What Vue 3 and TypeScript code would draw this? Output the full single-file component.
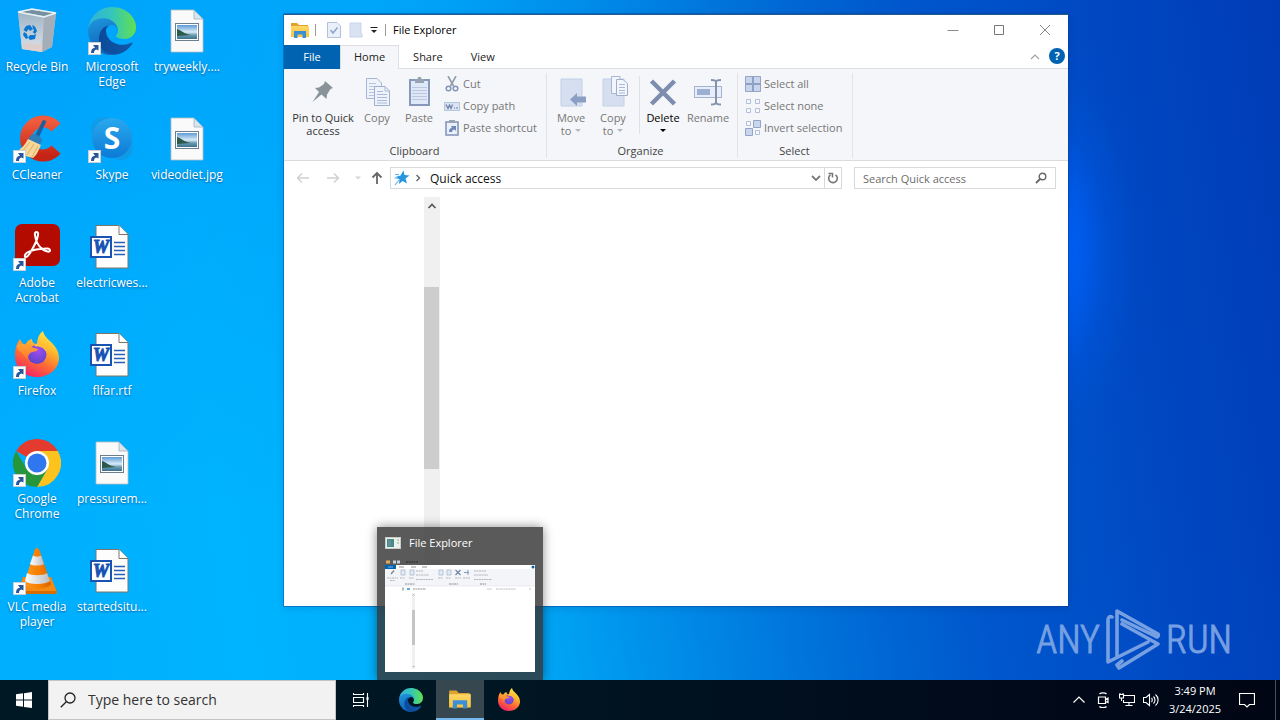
<script setup lang="ts">
import { ref } from 'vue'

interface DesktopItem {
  name: string
  icon: string
  shortcut: boolean
  col: number
  row: number
}

const items: DesktopItem[] = [
  { name: 'Recycle Bin', icon: 'bin', shortcut: false, col: 1, row: 1 },
  { name: 'CCleaner', icon: 'ccleaner', shortcut: true, col: 1, row: 2 },
  { name: 'Adobe Acrobat', icon: 'acrobat', shortcut: true, col: 1, row: 3 },
  { name: 'Firefox', icon: 'firefox', shortcut: true, col: 1, row: 4 },
  { name: 'Google Chrome', icon: 'chrome', shortcut: true, col: 1, row: 5 },
  { name: 'VLC media player', icon: 'vlc', shortcut: true, col: 1, row: 6 },
  { name: 'Microsoft Edge', icon: 'edge', shortcut: true, col: 2, row: 1 },
  { name: 'Skype', icon: 'skype', shortcut: true, col: 2, row: 2 },
  { name: 'electricwes...', icon: 'word', shortcut: false, col: 2, row: 3 },
  { name: 'flfar.rtf', icon: 'word', shortcut: false, col: 2, row: 4 },
  { name: 'pressurem...', icon: 'picture', shortcut: false, col: 2, row: 5 },
  { name: 'startedsitu...', icon: 'word', shortcut: false, col: 2, row: 6 },
  { name: 'tryweekly....', icon: 'picture', shortcut: false, col: 3, row: 1 },
  { name: 'videodiet.jpg', icon: 'picture', shortcut: false, col: 3, row: 2 },
]

const tabs = ['Home', 'Share', 'View']
const activeTab = ref('Home')

const clipboardSmall = [
  { label: 'Cut', icon: 'cut' },
  { label: 'Copy path', icon: 'copypath' },
  { label: 'Paste shortcut', icon: 'pasteshortcut' },
]
const selectSmall = [
  { label: 'Select all', icon: 'selall' },
  { label: 'Select none', icon: 'selnone' },
  { label: 'Invert selection', icon: 'selinv' },
]

const folderQuery = ref('')
const systemQuery = ref('')
</script>

<template>
  <div class="screen">
    <svg class="defs" aria-hidden="true">
      <defs>
        <linearGradient id="gEdgeTop" x1="0" y1="0.3" x2="1" y2="0.3">
          <stop offset="0" stop-color="#2fb1e0" /><stop offset="0.5" stop-color="#34c6b9" /><stop offset="1" stop-color="#62e04f" />
        </linearGradient>
        <linearGradient id="gEdgeMid" x1="0" y1="0" x2="0.3" y2="1">
          <stop offset="0" stop-color="#1f9be0" /><stop offset="1" stop-color="#0f62b8" />
        </linearGradient>
        <linearGradient id="gEdgeLow" x1="0" y1="0" x2="1" y2="0">
          <stop offset="0" stop-color="#0b4a9a" /><stop offset="1" stop-color="#1257a8" />
        </linearGradient>
        <linearGradient id="gFox" x1="0.8" y1="0" x2="0.3" y2="1">
          <stop offset="0" stop-color="#fff04a" /><stop offset="0.35" stop-color="#ffb62e" /><stop offset="0.65" stop-color="#ff6a33" /><stop offset="1" stop-color="#f0206c" />
        </linearGradient>
        <linearGradient id="gFoxHead" x1="0" y1="0" x2="0" y2="1">
          <stop offset="0" stop-color="#ffa436" /><stop offset="1" stop-color="#ff7a2c" />
        </linearGradient>
        <radialGradient id="gFoxGlobe" cx="0.55" cy="0.3" r="0.8">
          <stop offset="0" stop-color="#a04cf0" /><stop offset="1" stop-color="#5343c4" />
        </radialGradient>
        <linearGradient id="gSkype" x1="0" y1="0" x2="0" y2="1">
          <stop offset="0" stop-color="#2aa9ee" /><stop offset="1" stop-color="#0b7ad6" />
        </linearGradient>
        <linearGradient id="gC" x1="0" y1="0" x2="0" y2="1">
          <stop offset="0" stop-color="#ef5b3c" /><stop offset="1" stop-color="#c42414" />
        </linearGradient>
        <linearGradient id="gCone" x1="0" y1="0" x2="1" y2="0">
          <stop offset="0" stop-color="#ff9a1f" /><stop offset="0.6" stop-color="#f57c00" /><stop offset="1" stop-color="#d96200" />
        </linearGradient>
        <linearGradient id="gConeW" x1="0" y1="0" x2="1" y2="0">
          <stop offset="0" stop-color="#ffffff" /><stop offset="1" stop-color="#b9bcc0" />
        </linearGradient>
        <linearGradient id="gSky" x1="0" y1="0" x2="0" y2="1">
          <stop offset="0" stop-color="#5f9ad6" /><stop offset="0.5" stop-color="#d9ecf8" /><stop offset="0.7" stop-color="#6f9fb5" /><stop offset="1" stop-color="#39708f" />
        </linearGradient>
        <linearGradient id="gBinL" x1="0" y1="0" x2="0" y2="1">
          <stop offset="0" stop-color="#9fb4c4" /><stop offset="1" stop-color="#dde3ea" />
        </linearGradient>
        <linearGradient id="gFolder" x1="0" y1="0" x2="0" y2="1">
          <stop offset="0" stop-color="#ffd766" /><stop offset="1" stop-color="#f7c43c" />
        </linearGradient>
      </defs>

      <symbol id="i-bin" viewBox="0 0 48 48">
        <path d="M5 5 L19 2 L43 6 L39 40 L29 45 L9 42 Z" fill="#b9c6d1" opacity="0.95" />
        <path d="M5 5 L31 10 L29 45 L9 42 Z" fill="url(#gBinL)" />
        <path d="M31 10 L43 6 L39 40 L29 45 Z" fill="#a4aeb8" />
        <path d="M7 5 L19 3 L41 6 L31 9 Z" fill="#76909f" />
        <path d="M5 5 L19 2 L43 6 L31 10 Z" fill="none" stroke="#e9f2f8" stroke-width="1.4" />
        <path d="M10 36 L30 38 L29 45 L10 42 Z" fill="#e5c3bb" opacity="0.6" />
        <g fill="#0a78d2">
          <path d="M13 19 L17 18 L20 22 L17 24 L15.500 22 L13.500 25 L10.500 23 Z" />
          <path d="M19 18 L22 19.500 L24 24 L22 27 L19.500 25 L21 24 Z" />
          <path d="M11 25 L14 27 L15 31 L13 32 L10 28 Z" />
          <path d="M17 28 L21 28 L23 27 L22 32 L17 33 L15 30.500 Z" />
        </g>
      </symbol>

      <symbol id="i-edge" viewBox="0 0 256 256">
        <path fill="url(#gEdgeMid)" d="M105.730,241.420A79.200,79.200,0,0,1,83,220.080,80.720,80.720,0,0,1,112.540,100.200c3.120-1.470,8.450-4.130,15.540-4a32.350,32.350,0,0,1,25.690,13A31.880,31.880,0,0,1,160.130,128c0-.21,24.460-79.600-80-79.600-43.900,0-80,41.660-80,78.210A130.150,130.150,0,0,0,12.300,183a128,128,0,0,0,156.400,67.110,75.550,75.550,0,0,1-62.780-8Z" />
        <path fill="url(#gEdgeLow)" d="M231,190.500A94,94,0,0,1,220.500,195.200a101.900,101.900,0,0,1-35.900,6.460c-47.320,0-88.540-32.550-88.540-74.320A31.500,31.500,0,0,1,112.500,99.900C69.700,101.700,58.700,146.300,58.700,172.400c0,73.900,68.100,81.400,82.800,81.400,7.900,0,19.800-2.300,27-4.600l1.300-.4a128.300,128.300,0,0,0,66.600-52.800,4,4,0,0,0-5.400-5.500Z" />
        <path fill="url(#gEdgeTop)" d="M152.330,148.860c-.81,1.050-3.300,2.500-3.300,5.660,0,2.610,1.700,5.120,4.720,7.230,14.380,10,41.490,8.680,41.560,8.680a59.560,59.560,0,0,0,30.270-8.350A61.380,61.380,0,0,0,256,109.190c.26-22.410-8-37.310-11.340-43.910C223.460,23.840,177.720,0,128,0A128,128,0,0,0,0,126.200c.48-36.540,36.800-66.050,80-66.050,3.500,0,23.460.34,42,10.070,16.340,8.580,24.900,18.940,30.850,29.210,6.180,10.670,7.280,24.150,7.280,29.520S157.380,142.270,152.330,148.860Z" />
      </symbol>

      <symbol id="i-ccleaner" viewBox="0 0 48 48">
        <path d="M43 12.500 A17 17 0 1 0 43 34.500" fill="none" stroke="url(#gC)" stroke-width="12" />
        <path d="M30 5 L33.500 6 L26 22 L22 20.500 Z" fill="#1d5f9e" />
        <path d="M17 21 C21 18 28 20 29 26 L26 31 L15 25 Z" fill="#2d7dbb" />
        <path d="M15 24 L28 30 C25 36 24 40 20 43 L2 38 C8 34 12 30 15 24 Z" fill="#f5d79b" />
        <path d="M17 27 L8 38 M21 29 L14 40 M25 31 L19 42" stroke="#dcae62" stroke-width="1" fill="none" />
      </symbol>

      <symbol id="i-acrobat" viewBox="0 0 48 48">
        <rect x="2" y="1" width="45" height="42" rx="7" fill="#b30b00" />
        <path d="M22 12 C21 8 26 8 25 12 C24 19 20 25 17 30 C14 35 11 35 12 32 C13 29 20 26.500 27 26 C33 25 37 25 37 27.500 C37 30 31 28 28 25 C24 21 22.500 17 22 12 Z" fill="none" stroke="#ffffff" stroke-width="2" />
      </symbol>

      <symbol id="i-firefox" viewBox="0 0 48 48">
        <path d="M7 8 C8 11 10 13 12 14 C14 10 17 8 19 8 C19 11 21 13 24 13 C24 8 26 3 30 0 C31 5 35 8 39 12 C44 17 46 22 46 27 C46 38 36 46 24 46 C11 46 2 37 2 25 C2 17 4 12 7 8 Z" fill="url(#gFox)" />
        <circle cx="24" cy="23.500" r="9.500" fill="url(#gFoxGlobe)" />
        <path d="M4 14 C9 12 14 13 18 16 L25 18 C25 20 21 20.500 18 21.500 C15.500 23 15 25 15 28 C11 26 10 21 5 19 Z" fill="url(#gFoxHead)" />
        <path d="M22 13 C28 11 35 14 34 22 C31 17 28 15 22 15.500 Z" fill="#ffbe3a" />
      </symbol>

      <symbol id="i-chrome" viewBox="0 0 48 48">
        <path d="M24 24 L3.200 12 A24 24 0 0 1 44.800 12 Z" fill="#e33b2e" />
        <path d="M24 24 L24 12 L44.800 12 A24 24 0 0 1 24 48 L34.400 30 Z" fill="#fcc31e" />
        <path d="M24 24 L34.400 30 L24 48 A24 24 0 0 1 3.200 12 L13.600 30 Z" fill="#26963c" />
        <circle cx="24" cy="24" r="12" fill="#ffffff" />
        <circle cx="24" cy="24" r="9.500" fill="#3076ee" />
      </symbol>

      <symbol id="i-vlc" viewBox="0 0 48 48">
        <path d="M10 30 L38 30 L44 45 C44 47 42 47 41 47 L7 47 C5 47 4 46 5 44 Z" fill="#f58a10" />
        <path d="M5 44 L44 44 L43 47 L6 47 Z" fill="#d96c00" />
        <path d="M22 2 C22 1 26 1 26 2 L38 37 C35 43 13 43 11 37 Z" fill="url(#gCone)" />
        <path d="M20 8.500 C22 10 26 10 28 8.500 L31 17 C28 19 20 19 17 17 Z" fill="url(#gConeW)" />
        <path d="M14 26 C18 29 30 29 34 26 L37 34 C32 38 16 38 12 34 Z" fill="url(#gConeW)" />
      </symbol>

      <symbol id="i-skype" viewBox="0 0 48 48">
        <circle cx="15" cy="14" r="12" fill="#109be8" />
        <circle cx="33" cy="33" r="12" fill="#109be8" />
        <circle cx="24" cy="23" r="20" fill="url(#gSkype)" />
      </symbol>

      <symbol id="i-word" viewBox="0 0 48 48">
        <path d="M8 2.500 H31 L40 11.500 V45 H8 Z" fill="#fdfdfd" stroke="#7c7468" stroke-width="1" />
        <path d="M31 2.500 V11.500 H40" fill="#ffffff" stroke="#7c7468" stroke-width="1" />
        <path d="M26 19.500 H37 M26 23.500 H37 M26 27.500 H37 M26 31.500 H37" stroke="#2b5fb8" stroke-width="1.300" />
        <rect x="3" y="14" width="20" height="20" fill="#ffffff" stroke="#1853b4" stroke-width="2" />
      </symbol>

      <symbol id="i-picture" viewBox="0 0 48 48">
        <path d="M8 3 H31 L40 12 V45 H8 Z" fill="#fafafa" stroke="#b9bdc0" stroke-width="0.800" />
        <path d="M31 3 V12 H40 Z" fill="#d9e6ef" stroke="#9db3c2" stroke-width="0.800" />
        <rect x="12.500" y="16.500" width="23" height="17" fill="#ffffff" stroke="#6d7f8c" stroke-width="1" />
        <rect x="14" y="18" width="20" height="14" fill="url(#gSky)" />
        <path d="M14 22 C18 23 21 27 28 28 L14 29 Z" fill="#2c5a4a" />
      </symbol>

      <symbol id="i-folder" viewBox="0 0 20 20">
        <path d="M1 3 H7 L9 5 H18 V17 H1 Z" fill="#e0a22c" />
        <path d="M1 6 H19 V17 H1 Z" fill="url(#gFolder)" />
        <path d="M4 18 V11 H16 V18 H12.500 V14.500 H7.500 V18 Z" fill="#3a8fd6" />
      </symbol>

      <symbol id="i-pin" viewBox="0 0 32 32">
        <path d="M18 5 L26 12 L23.500 13 L20 18.500 L19.500 23 L14.500 18.500 L5.500 26 L12 16 L8 12 L12 11.500 L17 8 Z" fill="#8a9399" />
      </symbol>
      <symbol id="i-copy" viewBox="0 0 32 32">
        <path d="M5.500 2.500 H16 L20.500 7 V22.500 H5.500 Z" fill="#eef3fb" stroke="#a9b7d2" />
        <path d="M8 7.500 H15 M8 10.500 H17 M8 13.500 H17 M8 16.500 H17 M8 19.500 H17" stroke="#b8c5dd" />
        <path d="M13.500 10.500 H24 L28.500 15 V29.500 H13.500 Z" fill="#eef3fb" stroke="#9fafcd" />
        <path d="M24 10.500 V15 H28.500 M16 15.500 H22 M16 18.500 H26 M16 21.500 H26 M16 24.500 H26 M16 27 H26" fill="none" stroke="#a9b9d6" />
      </symbol>
      <symbol id="i-paste" viewBox="0 0 32 32">
        <rect x="7" y="4" width="19" height="25" fill="#dfe8f7" stroke="#8798bb" stroke-width="2" />
        <path d="M12 3 H14.500 C14.500 0 18.500 0 18.500 3 H21 V7 H12 Z" fill="#97a3b5" />
        <path d="M9 11.500 H24 M9 14.500 H24 M9 17.500 H24 M9 20.500 H24 M9 23.500 H24" stroke="#b9c7e2" />
      </symbol>
      <symbol id="i-moveto" viewBox="0 0 32 32">
        <path d="M6 3 H27 V30 H6 Z" fill="#d5dff0" stroke="#c3d0e6" />
        <path d="M15 23.500 L22 17 V20.500 H31 V26.500 H22 V30 Z" fill="#8b9fc5" />
      </symbol>
      <symbol id="i-copyto" viewBox="0 0 32 32">
        <path d="M6 3 H27 V30 H6 Z" fill="#d5dff0" stroke="#c3d0e6" />
        <path d="M14.500 0.500 H23 V17.500 H14.500 Z" fill="#f2f6fc" stroke="#a9b7d2" />
        <path d="M19.500 3.500 H26 L30.500 7.500 V19.500 H19.500 Z" fill="#f2f6fc" stroke="#9fafcd" />
        <path d="M22 8.500 H28 M22 11.500 H28 M22 14.500 H28 M22 17 H28" stroke="#a9b9d6" />
      </symbol>
      <symbol id="i-delete" viewBox="0 0 32 32">
        <path d="M4.500 5 L27.500 28 M27.500 5 L4.500 28" stroke="#7c8db0" stroke-width="4.500" fill="none" />
      </symbol>
      <symbol id="i-rename" viewBox="0 0 32 32">
        <rect x="2.500" y="10.500" width="27" height="11" fill="#e8eef9" stroke="#a3b3d0" />
        <rect x="5" y="13" width="13" height="6" fill="#9db0d4" />
        <path d="M19 4 C21 4 24 4 24 6 C24 4 27 4 29 4 M24 5 V27 M19 28.500 C21 28.500 24 28 24 26 C24 28 27 28.500 29 28.500" stroke="#8494ad" stroke-width="2" fill="none" />
      </symbol>

      <symbol id="i-cut" viewBox="0 0 16 16">
        <path d="M4 0 L9.500 10 M12 0 L6.500 10" stroke="#929da8" stroke-width="1.600" fill="none" />
        <circle cx="4.500" cy="12.500" r="2.300" fill="none" stroke="#8496b6" stroke-width="1.500" />
        <circle cx="11.500" cy="12.500" r="2.300" fill="none" stroke="#8496b6" stroke-width="1.500" />
      </symbol>
      <symbol id="i-copypath" viewBox="0 0 16 16">
        <rect x="0.500" y="4.500" width="15" height="8" fill="#dbe4f3" stroke="#b6c4dd" />
        <path d="M2 6.500 L4 10.500 L5.500 7 L7 10.500 L8.500 6.500 M10 10 H11 M12 10 H14" stroke="#6c7fa5" stroke-width="1.200" fill="none" />
      </symbol>
      <symbol id="i-pasteshortcut" viewBox="0 0 16 16">
        <rect x="2" y="2" width="12" height="13" fill="#eaf0fa" stroke="#8798bb" stroke-width="1.600" />
        <rect x="5" y="0" width="6" height="3" fill="#97a3b5" />
        <path d="M5 12 C5 9 6 8 8 8 L7 6 H12 V11 L10.500 9.500 C9 9.500 8 10.500 8 12 Z" fill="#6d86b8" />
      </symbol>
      <symbol id="i-selall" viewBox="0 0 16 16">
        <path d="M0.500 0.500 H15.500 V15.500 H0.500 Z" fill="#c9d5ec" stroke="#93a4c6" />
        <path d="M8 1 V15 M1 8 H15" stroke="#8ea0c4" stroke-width="2" />
      </symbol>
      <symbol id="i-selnone" viewBox="0 0 16 16">
        <path d="M1.500 1.500 H5.500 V5.500 H1.500 Z M10.500 1.500 H14.500 V5.500 H10.500 Z M1.500 10.500 H5.500 V14.500 H1.500 Z M10.500 10.500 H14.500 V14.500 H10.500 Z" fill="#f7f9fd" stroke="#b0bfda" />
      </symbol>
      <symbol id="i-selinv" viewBox="0 0 16 16">
        <path d="M8.500 0.500 H15.500 V7.500 H8.500 Z M0.500 8.500 H7.500 V15.500 H0.500 Z" fill="#c9d5ec" stroke="#93a4c6" />
        <path d="M1.500 1.500 H5.500 V5.500 H1.500 Z M10.500 10.500 H14.500 V14.500 H10.500 Z" fill="#f7f9fd" stroke="#b0bfda" />
      </symbol>
    </svg>

    <main class="desktop">
      <ul class="icons">
        <li v-for="it in items" :key="it.name" :class="['cell', 'c' + it.col, 'r' + it.row]">
          <button class="shortcut" type="button">
            <span class="pic">
              <svg class="pic-main" viewBox="0 0 48 48">
                <use :href="'#i-' + it.icon" />
                <text v-if="it.icon === 'word'" class="glyph-w" x="13" y="30">W</text>
                <text v-if="it.icon === 'skype'" class="glyph-s" x="24" y="34">S</text>
              </svg>
              <svg v-if="it.shortcut" class="pic-link" viewBox="0 0 13 13">
                <rect x="0.500" y="0.500" width="12" height="12" fill="#ffffff" stroke="#c9ced3" />
                <path d="M3 11 C3 7.500 4.500 6 7 5.800 L5 3 H10.500 V8.500 L8.500 7.500 C6.500 8 6 9 6 11 Z" fill="#27569c" />
              </svg>
            </span>
            <span class="name">{{ it.name }}</span>
          </button>
        </li>
      </ul>

      <div class="watermark">
        <span>ANY</span>
        <svg viewBox="0 0 56 64" fill="none" stroke="currentColor" stroke-width="3.600" stroke-linejoin="round" stroke-linecap="round">
          <path d="M7 9 C5 8 3 9 3 12 V54 L43 34 M12 49 V3 L53 26 C54 28 52 30 50 28 L17 12 M17 16 L53 36 L14 60 L12 57 L17 53" />
        </svg>
        <span>RUN</span>
      </div>

      <section class="window" aria-label="File Explorer">
        <header class="titlebar">
          <svg class="t-folder"><use href="#i-folder" /></svg>
          <i class="sep"></i>
          <button class="qa" type="button" aria-label="Properties">
            <svg viewBox="0 0 14 16"><path d="M0.500 0.500 H10 L13.500 4 V15.500 H0.500 Z" fill="#e9f0fa" stroke="#b4c2d9" /><path d="M3.500 8 L6 11 L10.500 5.500" fill="none" stroke="#8ea3c8" stroke-width="1.500" /></svg>
          </button>
          <button class="qa" type="button" aria-label="New folder">
            <svg viewBox="0 0 14 16"><path d="M1 1 H12 V11 L13 12 V15 H1 Z" fill="#d8e2f3" stroke="#c9d5ea" /></svg>
          </button>
          <button class="qa narrow" type="button" aria-label="Customize Quick Access Toolbar">
            <svg viewBox="0 0 8 8"><path d="M0.500 1.500 H7.500" stroke="#222" /><path d="M1 4 H7 L4 7 Z" fill="#222" /></svg>
          </button>
          <i class="sep"></i>
          <h1>File Explorer</h1>
          <div class="caption">
            <button type="button" aria-label="Minimize"><svg viewBox="0 0 12 12"><path d="M0.500 6.500 H11.500" stroke="#8a8a8a" /></svg></button>
            <button type="button" aria-label="Maximize"><svg viewBox="0 0 12 12"><path d="M1.500 1.500 H10.500 V10.500 H1.500 Z" fill="none" stroke="#777" /></svg></button>
            <button type="button" aria-label="Close"><svg viewBox="0 0 12 12"><path d="M1 1 L11 11 M11 1 L1 11" stroke="#888" /></svg></button>
          </div>
        </header>

        <nav class="tabs">
          <button class="file" type="button">File</button>
          <button v-for="t in tabs" :key="t" type="button" :class="['tab', { on: activeTab === t }]" @click="activeTab = t">{{ t }}</button>
          <span class="grow"></span>
          <button class="fold" type="button" aria-label="Minimize the Ribbon"><svg viewBox="0 0 10 8"><path d="M1 6 L5 2 L9 6" fill="none" stroke="#a0a0a0" stroke-width="1.200" /></svg></button>
          <button class="help" type="button" aria-label="Help">?</button>
        </nav>

        <div class="ribbon">
          <section class="group clip">
            <div class="tools">
              <button class="big pin dark" type="button"><svg><use href="#i-pin" /></svg><span>Pin to Quick access</span></button>
              <button class="big" type="button"><svg><use href="#i-copy" /></svg><span>Copy</span></button>
              <button class="big" type="button"><svg><use href="#i-paste" /></svg><span>Paste</span></button>
              <div class="stack">
                <button v-for="s in clipboardSmall" :key="s.label" class="small" type="button"><svg><use :href="'#i-' + s.icon" /></svg>{{ s.label }}</button>
              </div>
            </div>
            <h2>Clipboard</h2>
          </section>
          <section class="group org">
            <div class="tools">
              <button class="big" type="button"><svg><use href="#i-moveto" /></svg><span>Move</span><span class="more">to<i class="caret"></i></span></button>
              <button class="big" type="button"><svg><use href="#i-copyto" /></svg><span>Copy</span><span class="more">to<i class="caret"></i></span></button>
              <i class="vline"></i>
              <button class="big black" type="button"><svg><use href="#i-delete" /></svg><span>Delete</span><span class="more"><i class="caret"></i></span></button>
              <button class="big wide" type="button"><svg><use href="#i-rename" /></svg><span>Rename</span></button>
            </div>
            <h2>Organize</h2>
          </section>
          <section class="group sel">
            <div class="tools">
              <div class="stack">
                <button v-for="s in selectSmall" :key="s.label" class="small" type="button"><svg><use :href="'#i-' + s.icon" /></svg>{{ s.label }}</button>
              </div>
            </div>
            <h2>Select</h2>
          </section>
        </div>

        <div class="address">
          <button class="nav" type="button" aria-label="Back"><svg viewBox="0 0 16 16"><path d="M2.500 8 H14 M7 3.500 L2.500 8 L7 12.500" fill="none" stroke="#d0d0d0" stroke-width="1.400" /></svg></button>
          <button class="nav" type="button" aria-label="Forward"><svg viewBox="0 0 16 16"><path d="M2 8 H13.500 M9 3.500 L13.500 8 L9 12.500" fill="none" stroke="#d0d0d0" stroke-width="1.400" /></svg></button>
          <button class="nav slim" type="button" aria-label="Recent locations"><svg viewBox="0 0 16 16"><path d="M5 6.500 H11 L8 9.500 Z" fill="#d4d4d4" /></svg></button>
          <button class="nav up" type="button" aria-label="Up"><svg viewBox="0 0 16 16"><path d="M8 14 V3 M3.500 7.500 L8 3 L12.500 7.500" fill="none" stroke="#666" stroke-width="1.800" /></svg></button>
          <div class="path">
            <svg class="star" viewBox="0 0 16 16"><path d="M9.500 0.500 L10.500 5 L15.500 5.500 L11.500 8.500 L13 13.500 L8.500 11 L5 14 L5.500 9.500 L1.500 7 L6.500 5.500 Z" fill="#2795e0" /><path d="M1 15 L5 10 M0.500 8 H4 M1 4.500 H5" stroke="#5fb4ec" stroke-width="1.200" /></svg>
            <svg class="chev" viewBox="0 0 8 8"><path d="M2.500 1 L5.500 4 L2.500 7" fill="none" stroke="#666" stroke-width="1.400" /></svg>
            <button class="crumb" type="button">Quick access</button>
            <button class="drop" type="button" aria-label="Previous locations"><svg viewBox="0 0 10 10"><path d="M1 3 L5 7 L9 3" fill="none" stroke="#7a7a7a" stroke-width="1.800" /></svg></button>
            <button class="refresh" type="button" aria-label="Refresh"><svg viewBox="0 0 12 12"><path d="M8.500 2.800 A4.300 4.300 0 1 1 3.500 2.800" fill="none" stroke="#777" stroke-width="1.600" /><path d="M1.500 1.500 H5.500 V5.500" fill="none" stroke="#777" stroke-width="1.500" /></svg></button>
          </div>
          <label class="find">
            <input v-model="folderQuery" type="text" placeholder="Search Quick access" aria-label="Search Quick access" />
            <svg viewBox="0 0 12 12"><circle cx="7.500" cy="4.500" r="3.300" fill="none" stroke="#666" stroke-width="1.400" /><path d="M5 7 L1 11" stroke="#666" stroke-width="1.800" /></svg>
          </label>
        </div>

        <div class="body">
          <div class="pane">
            <div class="scroll">
              <button type="button" aria-label="Scroll up"><svg viewBox="0 0 10 8"><path d="M1.500 6 L5 2.500 L8.500 6" fill="none" stroke="#555" stroke-width="1.700" /></svg></button>
              <i class="thumb"></i>
            </div>
          </div>
        </div>
      </section>

      <aside class="preview">
        <div class="p-head">
          <svg viewBox="0 0 16 14"><rect x="0.500" y="1.500" width="15" height="11" fill="#eef0ee" stroke="#c9cccb" /><rect x="2" y="3" width="7" height="8" fill="#3f8f83" /><rect x="3" y="4" width="3" height="6" fill="#6a8aa0" /><path d="M12 4 H14 M12 7 H14" stroke="#86b57c" /></svg>
          <span>File Explorer</span>
        </div>
        <svg class="thumbnail" viewBox="0 0 150 114" aria-hidden="true">
          <rect x="0" y="7" width="150" height="107" fill="#ffffff" />
          <path d="M1 4 H5" stroke="#e0a860" stroke-width="3" /><path d="M8 4 H11 M12 4 H15" stroke="#c9d2de" stroke-width="3" /><path d="M21 4 H33" stroke="#2c2c2c" stroke-dasharray="2 0.500" />
          <rect x="0" y="7" width="11" height="4" fill="#0063b1" /><path d="M3 9 H8" stroke="#9cc8ec" stroke-width="0.800" />
          <path d="M14 9 H19 M26 9 H31 M37 9 H42" stroke="#777" stroke-width="0.800" />
          <circle cx="148" cy="9" r="1.500" fill="#0063b1" />
          <rect x="0" y="11" width="150" height="17" fill="#f3f5f8" /><path d="M0 28 H150" stroke="#e1e3e6" stroke-width="0.600" />
          <path d="M6 16 L9 12.500" stroke="#858e94" stroke-width="1.600" />
          <path d="M16 12 H20 V17 H16 Z M25 12 H29 V17 H25 Z M54 12 H58 V17 H54 Z M62 12 H66 V17 H62 Z" fill="#e4eaf4" stroke="#a3b4d0" stroke-width="0.700" />
          <path d="M70.500 12 L75.500 17 M75.500 12 L70.500 17" stroke="#6d80a8" stroke-width="1.100" />
          <path d="M79 14.500 H84 M83 12 V17" stroke="#8799bb" />
          <path d="M2 20 H13 M15 20 H20 M24 20 H29 M5 22.500 H10 M31 13 H38 M31 17 H44 M31 21.500 H48 M53 20 H58 M61 20 H66 M70 20 H76 M78 20 H85 M89 13 H101 M89 17 H103 M89 21.500 H107" stroke="#9aa0a8" stroke-width="0.700" stroke-dasharray="2 0.500" />
          <path d="M20 26 H30 M64 26 H73 M95 26 H101 M28 31 H41" stroke="#777" stroke-width="0.800" stroke-dasharray="2 0.500" />
          <path d="M18 29.500 V32.500" stroke="#777" /><path d="M22 31 H25" stroke="#2795e0" stroke-width="1.500" />
          <path d="M102 31 H107 M111 31 H131 M144 31 H146" stroke="#a0a0a0" stroke-width="0.700" stroke-dasharray="2 0.500" />
          <rect x="27" y="35" width="3" height="76" fill="#f0f0f0" /><rect x="27" y="52" width="3" height="35" fill="#c4c4c4" />
          <path d="M27.500 37.500 L28.500 36.500 L29.500 37.500 M27.500 108 L28.500 109 L29.500 108" fill="none" stroke="#999" stroke-width="0.800" />
        </svg>
      </aside>
    </main>

    <footer class="taskbar">
      <button class="start" type="button" aria-label="Start">
        <svg viewBox="0 0 16 16"><path d="M0 2.300 L7 1.300 V7.500 H0 Z M8 1.200 L16 0 V7.500 H8 Z M0 8.500 H7 V14.700 L0 13.700 Z M8 8.500 H16 V16 L8 14.900 Z" fill="#fff" /></svg>
      </button>
      <label class="search">
        <svg viewBox="0 0 16 16"><circle cx="10" cy="6" r="5" fill="none" stroke="#222" stroke-width="1.300" /><path d="M6.500 9.500 L0.800 15.200" stroke="#222" stroke-width="1.300" /></svg>
        <input v-model="systemQuery" type="text" placeholder="Type here to search" aria-label="Type here to search" />
      </label>
      <button class="task view" type="button" aria-label="Task View">
        <svg viewBox="0 0 16 16" fill="none" stroke="#fff" stroke-width="1.100"><path d="M0.500 1 V2.500 H10.500 V1 M0.500 5.500 H10.500 V10.500 H0.500 Z M0.500 15 V13.500 H10.500 V15 M14.500 1 V15" /><path d="M13.500 6.500 H15.500" stroke-width="3" /></svg>
      </button>
      <button class="task" type="button" aria-label="Microsoft Edge"><svg class="app"><use href="#i-edge" /></svg></button>
      <button class="task active" type="button" aria-label="File Explorer"><svg class="app"><use href="#i-folder" /></svg></button>
      <button class="task" type="button" aria-label="Firefox"><svg class="app"><use href="#i-firefox" /></svg></button>
      <span class="grow"></span>
      <button class="tray" type="button" aria-label="Show hidden icons"><svg viewBox="0 0 16 16" fill="none" stroke="#fff" stroke-width="1.200"><path d="M2.500 10.500 L8 5 L13.500 10.500" /></svg></button>
      <button class="tray" type="button" aria-label="Meet Now"><svg viewBox="0 0 16 16" fill="none" stroke="#fff" stroke-width="1.200"><path d="M3.500 5 H10.500 V11.500 H3.500 Z M10.500 7.500 L13 6 V10.500 L10.500 9.500 M4.500 2 C6 0.500 10 0.500 11.500 2 M4.500 14.500 C6 16 10 16 11.500 14.500" /></svg></button>
      <button class="tray" type="button" aria-label="Network"><svg viewBox="0 0 16 16" fill="none" stroke="#fff" stroke-width="1.100"><path d="M5 3.500 H15.500 V10.500 H4.500 V8 M10 10.500 V13.500 M6.500 13.500 H13.500 M0.500 2.500 H4.500 V6 H0.500 Z M2.500 6 V9 M1 2.500 V1 M4 2.500 V1" /></svg></button>
      <button class="tray" type="button" aria-label="Volume"><svg viewBox="0 0 16 16" fill="none" stroke="#fff" stroke-width="1.100"><path d="M0.500 5.500 H3 L6.500 2.500 V13.500 L3 10.500 H0.500 Z M8.500 6 C9.500 7 9.500 9 8.500 10 M10.500 4.500 C12.500 6.500 12.500 9.500 10.500 11.500 M12.500 2.500 C16 5.500 16 10.500 12.500 13.500" /></svg></button>
      <button class="clock" type="button">3:49 PM<br />3/24/2025</button>
      <button class="notes" type="button" aria-label="Notifications"><svg viewBox="0 0 16 16" fill="none" stroke="#fff" stroke-width="1.200"><path d="M0.500 1.500 H15.500 V12.500 H10.500 L8 15 L5.500 12.500 H0.500 Z" /></svg></button>
      <button class="peek" type="button" aria-label="Show desktop"></button>
    </footer>
  </div>
</template>

<style>
html,
body {
  margin: 0;
  overflow: hidden;
}
</style>

<style scoped>
.screen {
  display: grid;
  grid-template-rows: 1fr 40px;
  height: 100vh;
  font-family: 'Open Sans', 'Noto Sans', sans-serif;
  font-size: 12px;
  line-height: 15px;
  color: #222;
}
.screen * {
  box-sizing: border-box;
}
.defs {
  position: absolute;
  width: 0;
  height: 0;
}
button {
  margin: 0;
  padding: 0;
  border: 0;
  background: none;
  color: inherit;
  font: inherit;
}
input {
  min-width: 0;
  padding: 0;
  border: 0;
  outline: 0;
  background: none;
  color: inherit;
  font: inherit;
}
svg {
  display: block;
  flex: none;
}
.grow {
  flex: 1;
}

.desktop {
  position: relative;
  min-height: 0;
  background:
    radial-gradient(ellipse 120px 230px at 81% 37%, #0068ff 0%, rgba(0, 98, 252, 0.85) 28%, rgba(0, 90, 235, 0.35) 58%, rgba(0, 80, 215, 0.1) 82%, rgba(0, 78, 210, 0) 100%),
    radial-gradient(ellipse 700px 520px at 5% 0%, rgba(0, 140, 246, 0.4), rgba(0, 150, 250, 0) 100%),
    linear-gradient(82deg, #00aefe 0%, #00b4ff 18%, #00aefb 34%, #00a2f4 41%, #0088e6 51%, #0076dc 58%, #0064d2 66%, #0056cc 73%, #0050c8 80%, #0046c0 88%, #003cb6 100%);
}
.icons {
  display: grid;
  grid-template-columns: 74px 76px 74px;
  grid-template-rows: repeat(6, 108px);
  width: max-content;
  margin: 0;
  padding: 0;
  list-style: none;
}
.c1 { grid-column: 1; }
.c2 { grid-column: 2; }
.c3 { grid-column: 3; }
.r1 { grid-row: 1; }
.r2 { grid-row: 2; }
.r3 { grid-row: 3; }
.r4 { grid-row: 4; }
.r5 { grid-row: 5; }
.r6 { grid-row: 6; }
.shortcut {
  display: flex;
  flex-direction: column;
  align-items: center;
  width: 100%;
  padding-top: 7px;
}
.pic {
  position: relative;
}
.pic-main {
  width: 48px;
  height: 48px;
}
.glyph-w {
  font: italic 700 18px 'Liberation Serif', serif;
  fill: #1853b4;
  stroke: #1853b4;
  stroke-width: 1px;
  text-anchor: middle;
}
.glyph-s {
  font: 700 30px 'Open Sans', sans-serif;
  fill: #fff;
  text-anchor: middle;
}
.pic-link {
  position: absolute;
  left: 0;
  bottom: 0;
  width: 13px;
  height: 13px;
}
.name {
  margin-top: 4px;
  color: #fff;
  text-align: center;
  text-shadow: 0 1px 2px rgba(0, 40, 90, 0.6);
}

.watermark {
  position: absolute;
  right: 48px;
  bottom: 8px;
  display: flex;
  align-items: center;
  gap: 5px;
  color: #76a0e2;
  font-family: 'Roboto Condensed', 'Liberation Sans Narrow', Roboto, sans-serif;
  font-weight: 300;
  font-size: 38px;
  line-height: 64px;
  -webkit-text-stroke: 1px currentColor;
}
.watermark svg {
  width: 56px;
  height: 64px;
}

.window {
  position: absolute;
  inset: 14px 212px 74px 284px;
  display: flex;
  flex-direction: column;
  background: #fff;
  border-top: 1px solid #1f5c94;
  box-shadow: 0 0 0 1px rgba(10, 60, 130, 0.4), 0 2px 8px rgba(0, 20, 80, 0.15);
  font-size: 11px;
}
.titlebar {
  display: flex;
  align-items: center;
  height: 30px;
  padding-left: 6px;
}
.t-folder {
  width: 20px;
  height: 20px;
}
.sep {
  width: 1px;
  height: 12px;
  margin: 0 7px 0 5px;
  background: #9a9a9a;
}
.qa {
  margin: 0 4px;
}
.qa svg {
  width: 14px;
  height: 16px;
}
.qa.narrow {
  margin: 0 2px 0 3px;
}
.qa.narrow svg {
  width: 8px;
  height: 8px;
}
.titlebar h1 {
  margin: 0;
  padding-bottom: 2px;
  color: #000;
  font-size: 11px;
  font-weight: 400;
}
.caption {
  display: flex;
  margin-left: auto;
}
.caption button {
  display: grid;
  place-items: center;
  width: 46px;
  height: 30px;
}
.caption svg {
  width: 12px;
  height: 12px;
}

.tabs {
  display: flex;
  align-items: center;
  height: 24px;
  border-bottom: 1px solid #dcdee0;
}
.file {
  width: 56px;
  height: 24px;
  background: #0063b1;
  color: #fff;
}
.tab {
  height: 24px;
  padding: 0 13px 2px;
  border: 1px solid transparent;
  border-bottom: 0;
}
.tab.on {
  background: #f4f6f9;
  border-color: #dcdee0;
}
.fold {
  width: 20px;
}
.fold svg {
  width: 10px;
  height: 8px;
  margin: 0 auto;
}
.help {
  width: 16px;
  height: 16px;
  margin: 0 3px 2px 4px;
  border-radius: 50%;
  background: #0063b1;
  color: #fff;
  font-weight: 700;
}

.ribbon {
  display: flex;
  height: 92px;
  padding-top: 4px;
  background: #f4f6f9;
  border-bottom: 1px solid #dadbdc;
}
.group {
  display: flex;
  flex-direction: column;
  justify-content: space-between;
  height: 85px;
  border-right: 1px solid #e2e3e4;
}
.group h2 {
  margin: 0;
  color: #444;
  font-size: 11px;
  font-weight: 400;
  line-height: 15px;
  text-align: center;
}
.clip h2 {
  padding-right: 7px;
}
.org h2 {
  padding-right: 6px;
}
.sel h2 {
  padding-right: 8px;
}
.tools {
  display: flex;
  height: 66px;
}
.clip {
  width: 263px;
  padding-left: 6px;
}
.org {
  width: 191px;
  padding-left: 3px;
}
.sel {
  width: 115px;
  padding-left: 7px;
}
.big {
  display: flex;
  flex-direction: column;
  align-items: center;
  width: 42px;
  padding-top: 3px;
  color: #777;
  line-height: 13px;
}
.big svg {
  width: 32px;
  height: 32px;
  margin-bottom: 3px;
}
.big.pin {
  width: 66px;
}
.big.wide {
  width: 48px;
}
.big.dark {
  color: #333;
}
.big.black {
  color: #000;
}
.more {
  display: flex;
  gap: 4px;
  align-items: center;
  height: 13px;
}
.caret {
  border: 3px solid transparent;
  border-top-color: #b4b8be;
  border-bottom: 0;
}
.black .caret {
  border-top-color: #000;
}
.vline {
  width: 1px;
  height: 58px;
  margin: 3px 2px 0 5px;
  background: #e0e1e3;
}
.stack {
  display: flex;
  flex-direction: column;
}
.clip .stack {
  margin-left: 4px;
}
.small {
  display: flex;
  align-items: center;
  gap: 3px;
  height: 22px;
  padding-bottom: 1px;
  color: #777;
  white-space: nowrap;
}
.small svg {
  width: 16px;
  height: 16px;
}

.address {
  display: flex;
  align-items: center;
  height: 36px;
  padding: 0 12px 2px 11px;
}
.nav {
  width: 30px;
}
.nav svg {
  width: 16px;
  height: 16px;
}
.nav.slim {
  width: 18px;
  margin-left: -5px;
}
.nav.up {
  width: 22px;
  padding-left: 1px;
}
.path {
  display: flex;
  flex: 1;
  align-items: center;
  height: 22px;
  border: 1px solid #d9d9d9;
}
.star {
  width: 16px;
  height: 16px;
  margin-left: 3px;
}
.chev {
  width: 8px;
  height: 8px;
  margin: 0 8px 0 4px;
}
.crumb {
  flex: 1;
  color: #111;
  font-size: 12px;
  text-align: left;
}
.drop svg {
  width: 10px;
  height: 10px;
  margin: 0 3px;
}
.refresh {
  height: 20px;
  padding: 0 2px;
  border-left: 1px solid #d9d9d9;
}
.refresh svg {
  width: 12px;
  height: 12px;
}
.find {
  display: flex;
  flex: 0 0 202px;
  align-items: center;
  height: 22px;
  margin-left: 12px;
  padding: 0 8px;
  border: 1px solid #d9d9d9;
}
.find input {
  flex: 1;
  color: #333;
}
.find input::placeholder {
  color: #6d6d6d;
  opacity: 1;
}
.find svg {
  width: 12px;
  height: 12px;
}

.body {
  display: flex;
  flex: 1;
  min-height: 0;
}
.pane {
  display: flex;
  justify-content: flex-end;
  width: 156px;
}
.scroll {
  display: flex;
  flex-direction: column;
  width: 16px;
  background: #f0f0f0;
}
.scroll button {
  display: grid;
  place-items: center;
  height: 17px;
}
.scroll svg {
  width: 10px;
  height: 8px;
}
.thumb {
  height: 182px;
  margin: 73px 1px 0 0;
  background: #cdcdcd;
}

.preview {
  position: absolute;
  left: 377px;
  bottom: 0;
  width: 166px;
  padding: 0 8px 8px;
  background: rgba(53, 53, 53, 0.816);
  box-shadow: 0 0 10px rgba(0, 0, 0, 0.45);
}
.p-head {
  display: flex;
  align-items: center;
  gap: 8px;
  height: 31px;
  color: #fff;
  font-size: 11px;
}
.p-head svg {
  width: 16px;
  height: 14px;
}
.thumbnail {
  width: 100%;
  height: 114px;
}

.taskbar {
  position: relative;
  display: flex;
  align-items: stretch;
  background: linear-gradient(90deg, #001823 0%, #001622 40%, #010c1c 70%, #010614 100%);
  color: #fff;
}
.taskbar button {
  display: grid;
  place-items: center;
}
.start {
  width: 48px;
}
.start svg {
  width: 16px;
  height: 16px;
}
.search {
  display: flex;
  align-items: center;
  gap: 12px;
  width: 288px;
  padding: 0 12px 0 11px;
  background: #f2f2f2;
  border: 1px solid #c2c5c7;
  color: #222;
}
.search svg {
  width: 16px;
  height: 16px;
}
.search input {
  flex: 1;
  font-size: 14px;
  line-height: 20px;
}
.search input::placeholder {
  color: #333;
  opacity: 1;
}
.task {
  width: 48px;
  margin-right: 1px;
}
.task.view {
  width: 50px;
}
.task.view svg {
  width: 16px;
  height: 16px;
}
.task .app {
  width: 24px;
  height: 24px;
}
.task.active {
  background: #37474f;
  border-bottom: 2px solid #76b9ed;
}
.tray {
  width: 24px;
}
.tray svg {
  width: 16px;
  height: 16px;
}
.clock {
  width: 64px;
  font-size: 11px;
  line-height: 18px;
}
.taskbar .clock {
  display: block;
}
.notes {
  width: 40px;
}
.notes svg {
  width: 16px;
  height: 16px;
}
.peek {
  width: 5px;
  margin-left: 8px;
  border-left: 1px solid #4a5260;
}
</style>
